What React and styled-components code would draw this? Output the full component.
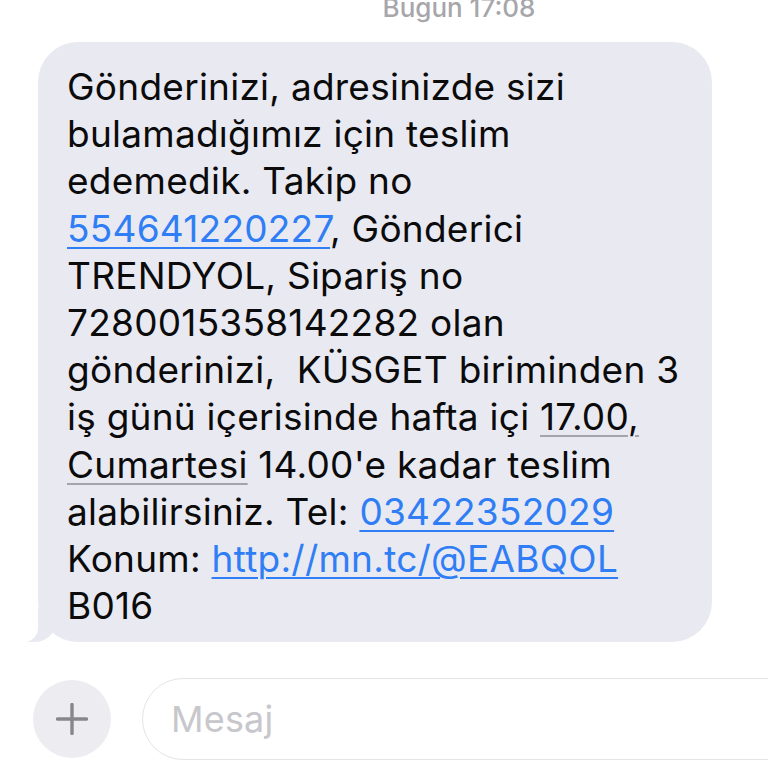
import React from "react";
import styled, { createGlobalStyle } from "styled-components";

const GlobalStyle = createGlobalStyle`
  html, body {
    margin: 0;
    padding: 0;
    background: #ffffff;
  }
  body {
    font-family: Inter, "Noto Sans", "Liberation Sans", sans-serif;
    -webkit-font-smoothing: antialiased;
  }
`;

const Screen = styled.div`
  width: 768px;
  height: 768px;
  overflow: hidden;
  display: flex;
  flex-direction: column;
  background: #ffffff;
`;

const Timestamp = styled.div`
  margin-top: -7px;
  height: 30px;
  line-height: 30px;
  font-size: 26px;
  font-weight: 500;
  color: #a6a6ab;
  text-align: center;
  padding-left: 150px;
`;

const Thread = styled.div`
  padding: 19px 56px 0 38px;
`;

const Bubble = styled.div`
  position: relative;
  background: #e9e9f1;
  border-radius: 40px;
  padding: 21px 20px 13px 29px;
  font-size: 37px;
  line-height: 47.2px;
  letter-spacing: 0.25px;
  color: #0b0b0c;
  white-space: nowrap;

  &::before {
    content: "";
    position: absolute;
    bottom: 0;
    left: -10px;
    width: 28px;
    height: 34px;
    background: #e9e9f1;
    border-bottom-right-radius: 22px 20px;
  }

  &::after {
    content: "";
    position: absolute;
    bottom: 0;
    left: -36px;
    width: 36px;
    height: 34px;
    background: #ffffff;
    border-bottom-right-radius: 14px;
  }
`;

const Link = styled.span`
  color: #2f7ef5;
  text-decoration: underline;
  text-decoration-thickness: 2px;
  text-underline-offset: 5px;
`;

const Detected = styled.span`
  text-decoration: underline;
  text-decoration-color: #a4a4ab;
  text-decoration-thickness: 2px;
  text-underline-offset: 5px;
`;

const Composer = styled.div`
  margin-top: 36px;
  display: flex;
  align-items: center;
  gap: 31px;
  padding-left: 33px;
`;

const PlusButton = styled.div`
  flex-shrink: 0;
  width: 78px;
  height: 78px;
  border-radius: 50%;
  background: #ececf1;
  display: flex;
  align-items: center;
  justify-content: center;
`;

const Field = styled.div`
  flex-shrink: 0;
  width: 700px;
  height: 82px;
  box-sizing: border-box;
  border: 1.5px solid #e4e4e9;
  border-radius: 42px;
  display: flex;
  align-items: center;
  padding-left: 28px;
  font-size: 36px;
  letter-spacing: 0.2px;
  color: #c7c7cc;
`;

function PlusIcon() {
  return (
    <svg width="32" height="32" viewBox="0 0 32 32">
      <path
        d="M16 1.5v29M1.5 16h29"
        stroke="#86868c"
        strokeWidth="3.4"
        strokeLinecap="round"
        fill="none"
      />
    </svg>
  );
}

export default function App() {
  return (
    <Screen>
      <GlobalStyle />
      <Timestamp>Bugün 17:08</Timestamp>
      <Thread>
        <Bubble>
          Gönderinizi, adresinizde sizi
          <br />
          bulamadığımız için teslim
          <br />
          edemedik. Takip no
          <br />
          <Link>554641220227</Link>, Gönderici
          <br />
          TRENDYOL, Sipariş no
          <br />
          7280015358142282 olan
          <br />
          gönderinizi,{"\u00a0"} KÜSGET biriminden 3
          <br />
          iş günü içerisinde hafta içi <Detected>17.00,</Detected>
          <br />
          <Detected>Cumartesi</Detected> 14.00'e kadar teslim
          <br />
          alabilirsiniz. Tel: <Link>03422352029</Link>
          <br />
          Konum: <Link>http://mn.tc/@EABQOL</Link>
          <br />
          B016
        </Bubble>
      </Thread>
      <Composer>
        <PlusButton>
          <PlusIcon />
        </PlusButton>
        <Field>Mesaj</Field>
      </Composer>
    </Screen>
  );
}
